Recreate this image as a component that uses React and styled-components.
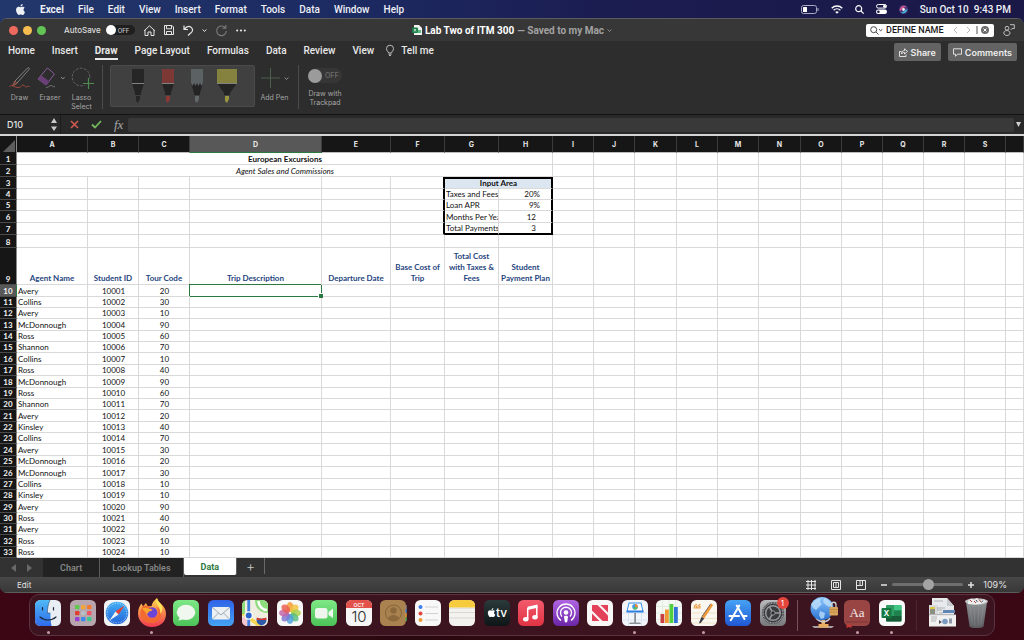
import React, { useState } from 'react';
import styled, { createGlobalStyle } from 'styled-components';

const GlobalStyle = createGlobalStyle`
  * {
    box-sizing: border-box;
  }

  body {
    margin: 0;
    background: #2a0812;
    font-family: Inter, "Liberation Sans", sans-serif;
  }

  button, input {
    margin: 0;
    padding: 0;
    border: 0;
    background: none;
    color: inherit;
    font: inherit;
    outline: none;
  }

  svg {
    display: block;
    flex: none;
    overflow: visible;
  }
`;

const Desktop = styled.div`
  display: flex;
  flex-direction: column;
  min-height: 100vh;
  background: linear-gradient(90deg, #22376b 0%, #1c2a62 35%, #1b1c50 60%, #1a1847 100%) top / 100% 30px no-repeat,
    linear-gradient(90deg, #3d0615, #2a0810 40%, #3a0814);
`;

/* menu bar */

const MenuBar = styled.header`
  display: flex;
  align-items: center;
  justify-content: space-between;
  height: 18px;
  padding: 0 13px 0 15px;
  color: #eef0f6;
  font-size: 10px;
`;

const MenuGroup = styled.div`
  display: flex;
  align-items: center;
  gap: ${(props) => props.$gap}px;
`;

const MenuItem = styled.button`
  font-family: Roboto, sans-serif;
  font-weight: ${(props) => (props.$strong ? 700 : 500)};
  line-height: 17px;
  white-space: nowrap;
`;

const IconButton = styled.button`
  display: flex;
  align-items: center;
  justify-content: center;
  color: ${(props) => props.$color || '#e4e4e4'};
`;

/* window */

const Window = styled.main`
  display: flex;
  flex: 1;
  flex-direction: column;
  overflow: hidden;
  border-top: 1px solid #5c5c60;
  border-radius: 7px;
  background: #2d2d2d;
`;

const TitleBar = styled.div`
  display: grid;
  grid-template-columns: 1fr auto 1fr;
  align-items: center;
  height: 22px;
  padding: 0 9px;
  background: #373737;
  color: #e4e4e4;
  font-size: 9px;
`;

const TitleSide = styled.div`
  display: flex;
  align-items: center;
  justify-content: ${(props) => (props.$end ? 'flex-end' : 'flex-start')};
  gap: ${(props) => props.$gap}px;
`;

const Lights = styled.div`
  display: flex;
  gap: 5px;
  margin-right: 9px;
`;

const Light = styled.button`
  width: 9px;
  height: 9px;
  border-radius: 50%;
  background: ${(props) => props.$color};
`;

const SwitchLabel = styled.label`
  display: flex;
  align-items: center;
  gap: 5px;
  font-weight: 500;
  font-size: 8px;
  color: #dcdcdc;
`;

const Switch = styled.span`
  display: flex;
  align-items: center;
  gap: ${(props) => (props.$large ? 3 : 2)}px;
  width: ${(props) => (props.$large ? 34 : 29)}px;
  height: ${(props) => (props.$large ? 15 : 10)}px;
  border-radius: 8px;
  background: ${(props) => (props.$large ? '#363636' : '#1f1f1f')};
  color: ${(props) => (props.$large ? '#6d6d6d' : '#c4c4c4')};
  font-size: ${(props) => (props.$large ? 7 : 6)}px;
  font-weight: 500;
`;

const SwitchInput = styled.input`
  appearance: none;
  width: ${(props) => props.$size}px;
  height: ${(props) => props.$size}px;
  border-radius: 50%;
  background: ${(props) => props.$color};
`;

const DocTitle = styled.h1`
  display: flex;
  align-items: center;
  gap: 3px;
  margin: 0;
  color: #fff;
  font-family: Roboto, sans-serif;
  font-size: 10px;
  font-weight: 700;
  white-space: nowrap;

  span {
    color: #a2a2a2;
  }
`;

const SearchBox = styled.div`
  display: flex;
  align-items: center;
  gap: 3px;
  width: 128px;
  height: 13px;
  padding: 0 5px 0 4px;
  border-radius: 2px;
  background: #fff;
`;

const SearchInput = styled.input`
  flex: 1;
  min-width: 0;
  color: #1a1a1a;
  font-family: Roboto, sans-serif;
  font-size: 9px;
  font-weight: 500;
`;

const Tabs = styled.nav`
  display: flex;
  align-items: flex-start;
  gap: 17px;
  height: 22px;
  padding: 2px 7px 0 8px;
  color: #e8e8e8;
  font-size: 10px;
`;

const Tab = styled.button`
  height: 17px;
  border-bottom: 2px solid ${(props) => (props.$active ? '#e8e8e8' : 'transparent')};
  font-family: Roboto, sans-serif;
  font-weight: ${(props) => (props.$active ? 700 : 500)};
  line-height: 15px;
  white-space: nowrap;
`;

const TellMe = styled(Tab)`
  display: flex;
  align-items: center;
  gap: 7px;
  margin-left: -5px;
`;

const TabActions = styled.div`
  display: flex;
  gap: 7px;
  margin-left: auto;
`;

const ActionButton = styled.button`
  display: flex;
  align-items: center;
  gap: 3px;
  height: 18px;
  padding: 0 5px;
  border-radius: 2px;
  background: #636363;
  color: #ececec;
  font-size: 9px;
  font-weight: 600;
`;

const Ribbon = styled.section`
  display: flex;
  height: 51px;
  padding: 2px 6px 0;
  color: #a5a5a5;
  font-size: 7px;
`;

const Tool = styled.button`
  display: flex;
  flex-direction: column;
  align-items: center;
  gap: 2px;
  width: ${(props) => props.$width}px;
  height: 46px;
  line-height: 9px;
`;

const ToolIcon = styled.span`
  display: flex;
  align-items: center;
  justify-content: center;
  gap: 4px;
  height: 26px;
`;

const Divider = styled.div`
  width: 1px;
  height: 44px;
  margin-left: 6px;
  background: #4c4c4c;
`;

const PenGallery = styled.div`
  display: flex;
  align-items: flex-start;
  justify-content: space-around;
  width: 145px;
  height: 42px;
  margin: 0 2px 0 7px;
  padding: 3px 12px;
  border: 1px solid #4b4b4b;
  border-radius: 2px;
  background: #404040;
`;

const TrackpadLabel = styled.label`
  display: flex;
  flex-direction: column;
  align-items: center;
  gap: 6px;
  width: 52px;
  padding-top: 3px;
  line-height: 9px;
  text-align: center;
`;

const FormulaBar = styled.div`
  display: flex;
  align-items: center;
  height: 22px;
  border-top: 1px solid #141414;
  border-bottom: 2px solid #d4d4d4;
  background: #292929;
  color: #e2e2e2;
`;

const NameBox = styled.input`
  width: 51px;
  padding-left: 7px;
  font-size: 9px;
  font-weight: 500;
`;

const Stepper = styled.div`
  display: flex;
  align-items: center;
  width: 10px;
  height: 19px;
  border-right: 1px solid #1c1c1c;
`;

const FormulaButtons = styled.div`
  display: flex;
  align-items: center;
  gap: 12px;
  padding: 0 5px 0 9px;
`;

const Fx = styled.button`
  color: #a9a9a9;
  font-family: "Liberation Serif", serif;
  font-size: 13px;
  font-style: italic;
  line-height: 14px;
`;

const FormulaInput = styled.input`
  flex: 1;
  height: 14px;
  margin-right: 2px;
  border-radius: 2px;
  background: #393939;
`;

/* sheet */

const Sheet = styled.div`
  flex: 1;
  overflow: hidden;
  background: #fff;
`;

const Grid = styled.table`
  width: 100%;
  table-layout: fixed;
  border-spacing: 0;
  color: #111;
  font-family: Lato, "Liberation Sans", sans-serif;
  font-size: 8px;
  line-height: 10px;
`;

const Corner = styled.th`
  height: 17px;
  padding: 0 1px 1px 3px;
  border-right: 1px solid #8a8a8a;
  background: #161616;
  vertical-align: bottom;
`;

const ColumnHead = styled.th`
  height: 17px;
  padding: 2px 0 0;
  border-right: 1px solid #3c3c3c;
  border-bottom: 1px solid ${(props) => (props.$active ? '#2c7a41' : '#bdbdbd')};
  background: ${(props) => (props.$active ? '#585858' : '#161616')};
  color: #e8e8e8;
  font-family: Inter, sans-serif;
  font-size: 7px;
  font-weight: 700;
`;

const RowHead = styled.th`
  padding: 0;
  border-right: 1px solid ${(props) => (props.$active ? '#2c7a41' : '#8a8a8a')};
  border-bottom: 1px solid #4a4a4a;
  background: ${(props) => (props.$active ? '#585858' : '#161616')};
  color: #f2f2f2;
  font-weight: 700;
  vertical-align: bottom;
`;

const frameSides = {
  t: 'border-top: 2px solid #000; line-height: 9px;',
  b: 'border-bottom: 2px solid #000;',
  r: 'border-right: 2px solid #000;',
};

const Cell = styled.td`
  overflow: hidden;
  height: ${(props) => props.$height}px;
  padding: 0 ${(props) => props.$padRight || 0}px 0 1px;
  border-right: 1px solid #d9d9d9;
  border-bottom: 1px solid #d9d9d9;
  background: ${(props) => props.$fill || 'transparent'};
  font-style: ${(props) => (props.$italic ? 'italic' : 'normal')};
  font-weight: ${(props) => (props.$bold ? 700 : 400)};
  text-align: ${(props) => props.$align || 'left'};
  vertical-align: bottom;
  white-space: nowrap;
  ${(props) => (props.$frame || '').split('').map((side) => frameSides[side]).join(' ')}
`;

const HeadingCell = styled(Cell)`
  padding: 0;
  color: #1f4580;
  font-weight: 700;
  line-height: 11px;
  text-align: center;
  white-space: pre-line;
`;

const ActiveCell = styled(Cell)`
  position: relative;
  overflow: visible;
  border-color: #2c7a41;
  box-shadow: -1px -1px 0 #2c7a41;

  &::after {
    content: '';
    position: absolute;
    right: -2px;
    bottom: -2px;
    width: 4px;
    height: 4px;
    border: 1px solid #fff;
    border-width: 1px 0 0 1px;
    background: #2c7a41;
  }
`;

const SheetTabs = styled.div`
  display: flex;
  height: 19px;
  background: #323232;
  color: #8c8c8c;
  font-size: 9px;
`;

const SheetNav = styled.div`
  display: flex;
  align-items: center;
  justify-content: center;
  gap: 11px;
  width: 43px;
`;

const SheetTab = styled.button`
  height: ${(props) => (props.$active ? 17 : 19)}px;
  padding: 0 ${(props) => props.$pad}px;
  border-right: 1px solid #5c5c5c;
  border-radius: ${(props) => (props.$active ? '0 0 2px 2px' : 0)};
  background: ${(props) => (props.$active ? '#fff' : '#222')};
  color: ${(props) => (props.$active ? '#2c7a41' : '#8c8c8c')};
  font-family: Roboto, sans-serif;
  font-weight: ${(props) => (props.$active ? 700 : 500)};
  white-space: nowrap;
`;

const AddSheet = styled.button`
  width: 28px;
  height: 16px;
  border-right: 1px solid #6a6a6a;
  color: #c4c4c4;
  font-size: 14px;
  font-weight: 300;
  line-height: 14px;
`;

const StatusBar = styled.footer`
  display: flex;
  align-items: center;
  justify-content: space-between;
  height: 16px;
  padding: 0 17px;
  border-bottom: 1px solid #5c5c5c;
  background: linear-gradient(#484848, #383838);
  color: #e0e0e0;
  font-size: 8px;
`;

const StatusTools = styled.div`
  display: flex;
  align-items: center;
  gap: 15px;
`;

const ZoomControl = styled.div`
  display: flex;
  align-items: center;
  gap: 5px;
`;

const ZoomSlider = styled.input`
  appearance: none;
  width: 71px;
  height: 3px;
  border-radius: 2px;
  background: #6e6e6e;

  &::-webkit-slider-thumb {
    appearance: none;
    width: 11px;
    height: 11px;
    border-radius: 50%;
    background: #a4a4a4;
  }
`;

const ZoomValue = styled.output`
  width: 28px;
  font-size: 9px;
  text-align: right;
`;

/* dock */

const Dock = styled.nav`
  display: flex;
  justify-content: space-between;
  height: 42px;
  margin: 1px 29px 4px;
  padding: 5px 5px 0;
  border: 1px solid #5a343f;
  border-radius: 10px;
  background: #3c1420;
`;

const DockItem = styled.button`
  position: relative;
  display: flex;
  flex-direction: column;
  align-items: center;
  gap: 5px;
  width: 26px;

  &::after {
    content: '';
    width: 3px;
    height: 3px;
    border-radius: 50%;
    background: ${(props) => (props.$running ? '#c99aa5' : 'transparent')};
  }
`;

const DockDivider = styled.div`
  width: 1px;
  height: 31px;
  margin: 0 3px;
  background: ${(props) => (props.$faint ? '#4c2530' : '#75515b')};
`;

const Badge = styled.span`
  position: absolute;
  top: -3px;
  right: -3px;
  width: 12px;
  height: 12px;
  border-radius: 50%;
  background: #e5463c;
  color: #fff;
  font-size: 8px;
  line-height: 12px;
`;

const appleShape =
  'M12.15 6.9c-.95 0-2.42-1.08-3.96-1.04-2.04.03-3.91 1.18-4.96 3.01-2.12 3.68-.55 9.1 1.52 12.09 1.01 1.45 2.21 3.09 3.79 3.04 1.52-.07 2.09-.99 3.94-.99 1.83 0 2.35.99 3.96.95 1.64-.03 2.68-1.48 3.68-2.95 1.16-1.69 1.64-3.33 1.66-3.42-.04-.01-3.18-1.22-3.22-4.86-.03-3.04 2.48-4.49 2.6-4.56-1.43-2.09-3.62-2.32-4.39-2.38-2-.16-3.68 1.09-4.62 1.09zM15.53 3.83c.84-1.01 1.4-2.43 1.25-3.83-1.21.05-2.66.8-3.53 1.82-.78.9-1.46 2.34-1.27 3.71 1.34.1 2.72-.69 3.55-1.7';

const Chevron = ({ color = 'currentColor', size = 5 }) => (
  <svg width={size} height={size} viewBox="0 0 6 6" fill="none" stroke={color} strokeWidth="1.2">
    <path d="M.8 1.8 3 4.2l2.2-2.4" />
  </svg>
);

const Tile = ({ fill, children }) => (
  <svg width="26" height="26" viewBox="0 0 26 26">
    <rect width="26" height="26" rx="5.5" fill={fill} />
    {children}
  </svg>
);

const Gradients = () => (
  <svg width="0" height="0" aria-hidden="true">
    <defs>
      {[
        ['gFinder', '#4fb9f6', '#2f6bea'],
        ['gSafari', '#45b0f5', '#2363d8'],
        ['gFox', '#ffd84a', '#f03a50'],
        ['gGreen', '#7ee886', '#4cc358'],
        ['gMail', '#2f62e6', '#45a4f3'],
        ['gTv', '#2b3a3c', '#0e1517'],
        ['gMusic', '#f25a6c', '#e03343'],
        ['gPod', '#b066e2', '#6c25a8'],
        ['gStore', '#45a2f4', '#2058d4'],
        ['gGear', '#b9babc', '#78797b'],
        ['gGlobe', '#8cc8ff', '#2c73d0'],
        ['gTrash', '#8e9193', '#5b5d60'],
      ].map(([id, from, to]) => (
        <linearGradient key={id} id={id} x1="0" y1="0" x2="0" y2="1">
          <stop offset="0" stopColor={from} />
          <stop offset="1" stopColor={to} />
        </linearGradient>
      ))}
    </defs>
  </svg>
);

const FinderIcon = () => (
  <Tile fill="#e9eef4">
    <path d="M5.500 0H15c-1.800 4-2.600 8-2.600 13h3c0 5 .3 9 1.200 13H5.500A5.500 5.500 0 0 1 0 20.500v-15A5.500 5.500 0 0 1 5.500 0z" fill="url(#gFinder)" />
    <path d="M7.500 7.500v2.500M18.500 7.500v2.500M5 17c4.500 4 11.500 4 16 0" fill="none" stroke="#1d2b3f" strokeWidth="1.200" strokeLinecap="round" />
    <path d="M15 0c-1.800 4-2.600 8-2.600 13h3" fill="none" stroke="#23364f" strokeWidth=".5" />
  </Tile>
);

const launchColors = ['#5fc94f', '#f2a63a', '#f07a30', '#e2402f', '#b9bdc4', '#ee5465', '#9b3fd0', '#3a8bea', '#3cc88e'];

const LaunchpadIcon = () => (
  <Tile fill="#b8a6ae">
    {launchColors.map((color, i) => (
      <rect key={color} x={5 + (i % 3) * 6} y={5 + Math.floor(i / 3) * 6} width="4.500" height="4.200" rx="1" fill={color} />
    ))}
  </Tile>
);

const SafariIcon = () => (
  <Tile fill="#f3f4f6">
    <circle cx="13" cy="13" r="11.300" fill="url(#gSafari)" />
    <circle cx="13" cy="13" r="9.800" fill="none" stroke="#cfe6fb" strokeWidth="1.200" strokeDasharray=".5 1.200" />
    <path d="M20.500 5.500 14.500 14.500 11.500 11.500z" fill="#e8402f" />
    <path d="M5.500 20.500 11.500 11.500 14.500 14.500z" fill="#f4f4f4" />
  </Tile>
);

const FirefoxIcon = () => (
  <svg width="26" height="26" viewBox="0 0 26 26">
    <path d="M18-2c1 2.500 1.500 3.500 3 5 3.500 3 6 6 6 11 0 8-6 13-14 13S-1 21-1 13.500C-1 9 .5 6 2.500 3.500L4 6.500l3-3.500 1.500 3 4 .2C13 3 15 .5 18-2z" fill="url(#gFox)" />
    <path d="M4 6c3-1 6 0 8 1.500l-3 2c-3 1-3 5-1 7 3 3.500 9 2.500 11-1.500 1-3 0-6-2-8 3 1 5.500 4 5 8-.500 5-5 8-9.500 8C6 23 1 18 1.500 12 2 9 3 7.500 4 6z" fill="#f26a2f" />
    <circle cx="13.200" cy="12.500" r="5.200" fill="#6b46d6" />
    <path d="M3 8.500c3-1.500 6-.8 7.500.2l3 .3c-.2 2-2.500 2.200-3.500 2.500-.3 1.500-1.500 2-2.500 2z" fill="#fba52b" />
    <path d="M18-2c-1.500 3-.5 6 1.500 8.500 1.500 2 2 4.500 1.500 7.500 3-3 3-7 1-10-2-2-3.500-3.500-4-6z" fill="#ffe25a" />
  </svg>
);

const MessagesIcon = () => (
  <Tile fill="url(#gGreen)">
    <ellipse cx="13" cy="12.300" rx="9.300" ry="7.600" fill="#eff7ef" />
    <path d="M6.500 16.500c.3 2-.4 3.200-1.500 4 2.500 0 4.500-.8 5.500-2z" fill="#eff7ef" />
  </Tile>
);

const MailIcon = () => (
  <Tile fill="url(#gMail)">
    <rect x="4" y="7" width="18" height="12.500" rx="1.500" fill="#edf0f3" />
    <path d="M4.500 7.500 13 15l8.500-7.500M4.500 19l6-6M21.500 19l-6-6" fill="none" stroke="#8c98a6" strokeWidth=".8" />
  </Tile>
);

const MapsIcon = () => (
  <Tile fill="#efece0">
    <path d="M13 0h7.500A5.500 5.500 0 0 1 26 5.500V13C18 13 13 8 13 0z" fill="#8fdc7e" />
    <path d="M16.500 1c0 5 4 9 8.500 9" fill="none" stroke="#fff" strokeWidth="2.500" />
    <path d="M0 18v2.500A5.500 5.500 0 0 0 5.500 26H10L2 17z" fill="#f3c6cf" />
    <path d="M0 10 20 25.500 15 26 0 15z" fill="#f5d64f" />
    <path d="M3 .6V14H0V5.500C0 3.200 1.200 1.400 3 .6z" fill="#8fdc7e" />
    <path d="M6.700 0v26" stroke="#3f7fe0" strokeWidth="2.800" />
    <circle cx="6.700" cy="15.500" r="4.200" fill="#fff" />
    <circle cx="6.700" cy="15.500" r="3" fill="#2c66c8" />
    <path d="M15 18c3 1 6 1 9 0 1.500 4-1 6.500-4.500 7.500C16 24.500 13.500 22 15 18z" fill="#2d59a8" />
    <path d="M14.700 17.500c3 1.500 6.500 1.500 9.600 0v2.500h-9.600z" fill="#d8392f" />
  </Tile>
);

const petals = ['#f29b2f', '#f3c13c', '#a8cf45', '#55bd7d', '#4a9fdc', '#7e74cf', '#c264a8', '#ec5a4f'];

const PhotosIcon = () => (
  <Tile fill="#f7f7f7">
    {petals.map((color, i) => (
      <ellipse key={color} cx="13" cy="7" rx="3.500" ry="5" fill={color} opacity=".82" transform={`rotate(${i * 45} 13 13)`} />
    ))}
  </Tile>
);

const FaceTimeIcon = () => (
  <Tile fill="url(#gGreen)">
    <rect x="4" y="8" width="12.500" height="10.500" rx="2.500" fill="#eef6ee" />
    <path d="m17.500 12 4.500-3.500v9.500L17.500 15z" fill="#eef6ee" />
  </Tile>
);

const CalendarIcon = () => (
  <Tile fill="#f6f6f6">
    <path d="M0 8V5.500A5.500 5.500 0 0 1 5.500 0h15A5.500 5.500 0 0 1 26 5.500V8z" fill="#e2524a" />
    <text x="13" y="6.500" textAnchor="middle" fontSize="5" fontWeight="600" fill="#fff">OCT</text>
    <text x="13" y="22" textAnchor="middle" fontSize="15" fontWeight="300" fill="#2a2a2a">10</text>
  </Tile>
);

const ContactsIcon = () => (
  <Tile fill="#a9824f">
    <path d="M25.500 5h1.200v4h-1.200z" fill="#8d8d8d" />
    <path d="M25.500 9h1.200v4h-1.200z" fill="#3f8be0" />
    <path d="M25.500 13h1.200v4h-1.200z" fill="#f0a030" />
    <path d="M25.500 17h1.200v4h-1.200z" fill="#52b955" />
    <circle cx="13.500" cy="13" r="8" fill="none" stroke="#86653a" />
    <circle cx="13.500" cy="10.500" r="3.200" fill="#8b693c" />
    <path d="M8 18.700c1-5 10-5 11 0-3 2.800-8 2.800-11 0z" fill="#8b693c" />
  </Tile>
);

const RemindersIcon = () => (
  <Tile fill="#f8f8f8">
    {['#3f7ff0', '#e0463c', '#ee9a36'].map((color, i) => (
      <g key={color}>
        <circle cx="5.500" cy={7 + i * 6.500} r="2" fill={color} />
        <path d={`M10 ${7 + i * 6.500}h13`} stroke="#c8c8c8" strokeWidth=".8" />
      </g>
    ))}
  </Tile>
);

const NotesIcon = () => (
  <Tile fill="#f3f2ee">
    <path d="M0 7.500v-2A5.500 5.500 0 0 1 5.500 0h15A5.500 5.500 0 0 1 26 5.500v2z" fill="#f7cb3e" />
    <path d="M0 12.500h26M0 18h26" stroke="#cfcdc8" strokeWidth=".7" />
    <path d="M0 8.300h26" stroke="#b5b0a4" strokeWidth=".6" strokeDasharray=".8 .8" />
  </Tile>
);

const TvIcon = () => (
  <Tile fill="url(#gTv)">
    <path d={appleShape} fill="#fff" transform="translate(3 8) scale(.38)" />
    <text x="12" y="17" fontSize="12" fontWeight="500" fill="#fff">tv</text>
  </Tile>
);

const MusicIcon = () => (
  <Tile fill="url(#gMusic)">
    <path d="M9.500 6.700 19.500 4.500v3.300L9.500 10z" fill="#fff" />
    <path d="M9.700 8v11M18.800 6v11.500" stroke="#fff" strokeWidth="1.500" />
    <ellipse cx="7.800" cy="19.300" rx="2.700" ry="2.200" fill="#fff" />
    <ellipse cx="17" cy="17.300" rx="2.700" ry="2.200" fill="#fff" />
  </Tile>
);

const PodcastsIcon = () => (
  <Tile fill="url(#gPod)">
    <g fill="none" stroke="#fff" strokeWidth="1.300">
      <path d="M8 20.500a9 9 0 1 1 10 0" />
      <path d="M9 16.500a5.500 5.500 0 1 1 8 0" />
    </g>
    <circle cx="13" cy="12.500" r="2.300" fill="#fff" />
    <path d="M11 16.500c0-1 4-1 4 0l-.7 5c-.3 1.200-2.300 1.200-2.600 0z" fill="#fff" />
  </Tile>
);

const NewsIcon = () => (
  <Tile fill="#f8f6f6">
    <path d="M5 5h5.500L21 15.500V21h-5.500L5 10.500z" fill="#e3405a" />
    <path d="M13.500 5H21v7.500zM5 13.500V21h7.500z" fill="#e3405a" />
  </Tile>
);

const KeynoteIcon = () => (
  <Tile fill="#f2f5f9">
    <path d="M6.500 0v26M19.500 0v26M0 13h26M0 20h26" stroke="#d3dfee" strokeWidth=".7" />
    <path d="M12.300 13h1.600v10h-1.600z" fill="#7f858c" />
    <path d="M8 22.500h10l1 1.500H7z" fill="#8b9097" />
    <path d="M7 3h12l2 8.500H5z" fill="#fff" stroke="#3a8ee6" strokeWidth="1" />
    <path d="M4.500 10.500h17v2h-17z" fill="#2c7fe0" />
    <circle cx="13" cy="6.800" r="2.800" fill="#3f9be8" />
    <path d="M13 6.800V4a2.800 2.800 0 0 1 2.600 3.800z" fill="#f08a34" />
    <path d="M13 6.800 15.600 7.800A2.800 2.800 0 0 1 11 8.800z" fill="#5fc05a" />
  </Tile>
);

const NumbersIcon = () => (
  <Tile fill="#f5f8f4">
    <path d="M6.500 0v26M13 0v26M19.500 0v26M0 6.500h26M0 13h26M0 19.500h26" stroke="#d7e8d5" strokeWidth=".7" />
    <path d="M4.500 14h3.800v9H4.500z" fill="#c93f3f" />
    <path d="M9 9.500h3.800V23H9z" fill="#ef9a34" />
    <path d="M13.500 4h3.800v19h-3.800z" fill="#52cf3f" />
    <path d="M18 7h3.800v16H18z" fill="#2f72d8" />
  </Tile>
);

const PagesIcon = () => (
  <Tile fill="#faf7f0">
    <path d="M0 13h26M0 18.500h26M1 23h24" stroke="#ead9b8" strokeWidth=".7" />
    <path d="M20 3.500 22.200 5l-9 13.500-2.600-1.700z" fill="#f09a3e" />
    <path d="m10.600 16.800 2.600 1.700-3.500 4.500-1.500.5.200-1.700z" fill="#3d3f45" />
    <path d="M19.700 3.800 11 16.500" stroke="#5a5c60" strokeWidth=".8" />
    <path d="M6 4.200C4.200 4.500 3.200 6 3.200 8h2.300V6.200H4.600M9.500 4.200C7.700 4.500 6.700 6 6.700 8H9V6.200H8" fill="none" stroke="#eda04c" strokeWidth="1.100" />
  </Tile>
);

const AppStoreIcon = () => (
  <Tile fill="url(#gStore)">
    <g stroke="#fff" strokeWidth="2" strokeLinecap="round">
      <path d="m14.300 5.500-7.500 13M11.700 5.500l7.800 13.500M4.500 16h9.500M18.500 16h3M6.500 19l-.8 1.200" />
    </g>
  </Tile>
);

const SettingsIcon = () => (
  <Tile fill="url(#gGear)">
    <circle cx="13" cy="13" r="11" fill="#3b3c3f" />
    <circle cx="13" cy="13" r="10" fill="none" stroke="#a3a4a6" strokeWidth="1.500" strokeDasharray="1 .6" />
    <circle cx="13" cy="13" r="7.300" fill="none" stroke="#98999c" strokeWidth="1.500" />
    <path d="M13 13h7M13 13l-3.500-6M13 13l-3.500 6" stroke="#98999c" strokeWidth="1.500" />
    <circle cx="13" cy="13" r="2.200" fill="#2c2d30" stroke="#98999c" />
  </Tile>
);

const NetworkIcon = () => (
  <svg width="26" height="26" viewBox="0 0 26 26">
    <path d="M2 26h22l-2 2H4z" fill="#a9a0a4" />
    <path d="M11.500 20h3.500v4h3.500v3.500h-10V24h3z" fill="#e9ae62" />
    <path d="M6 18c4 5 11 5 14 0" fill="none" stroke="#c8cdd4" strokeWidth="1.500" />
    <circle cx="12" cy="8.500" r="11.500" fill="url(#gGlobe)" />
    <path d="M4 1c3-2 5-3 7-2l-1 3 2 2-3 3-3 3-3-2-2-4zM14-2c4 1 7 4 8 7l-3 2-3-2-3-3zM10 11l5 2-1 5-3 1-2-4z" fill="#c4e3fb" opacity=".75" />
    <rect x="19.500" y="7" width="8.500" height="8.500" rx="1" fill="#d9a55b" />
    <path d="M21.500 7V4.500a2.200 2.200 0 0 1 4.500 0V7" fill="none" stroke="#d0d0d0" strokeWidth="1.300" />
    <path d="M19.500 9.500H28M19.500 12H28" stroke="#a97a3b" strokeWidth=".6" />
  </svg>
);

const DictionaryIcon = () => (
  <Tile fill="#984543">
    <path d="M2 22h22" stroke="#7a3230" strokeWidth=".8" />
    <path d="M2.500 24.500h5V28L5 27l-2.500 1z" fill="#c23a35" />
    <text x="13" y="17" textAnchor="middle" fontFamily="Liberation Serif, serif" fontSize="13" fill="#f4eaea">Aa</text>
  </Tile>
);

const ExcelTile = () => (
  <Tile fill="#fbfbfb">
    <rect x="7" y="5" width="15.500" height="16.500" rx="1" fill="#2f9c62" />
    <path d="M15 5h6.500a1 1 0 0 1 1 1v4.500H15z" fill="#42c686" />
    <path d="M15 10.500h7.500V16H15z" fill="#1f8350" />
    <path d="M7 16h15.500v4.500a1 1 0 0 1-1 1H8a1 1 0 0 1-1-1z" fill="#185c37" />
    <rect x="2.500" y="8" width="10" height="10" rx="1" fill="#157a41" />
    <text x="7.500" y="16" textAnchor="middle" fontSize="8" fontWeight="600" fill="#fff">X</text>
  </Tile>
);

const DocumentIcon = () => (
  <svg width="26" height="26" viewBox="0 0 26 26">
    <path d="M3-2h15l7 8v10H3z" fill="#e7e9ea" />
    <path d="M18-2v8h7" fill="#c9cccf" />
    <path d="M0 5h9v11H0z" fill="#d7d9da" />
    <path d="M1 7h5v7H1z" fill="#8b8f80" />
    <path d="M1 7h5v2H1z" fill="#dac944" />
    <path d="M14 10h12v3H14z" fill="#5f86b5" />
    <path d="M0 15h27v11.500H0z" fill="#f0f0f0" />
    <path d="M2 17h6M2 19h6M2 21h5M10 13h4M8 8h8M8 10h5M5 1h9M0 14.700h27" stroke="#9ea2a6" strokeWidth=".8" />
    <circle cx="16" cy="21.500" r="2.800" fill="#7b9bc3" />
    <path d="M20 18.500h3v5h-3z" fill="#8f9aa6" />
    <path d="m10 20 3 2-3 2z" fill="#50555b" />
  </svg>
);

const TrashIcon = () => (
  <svg width="26" height="26" viewBox="0 0 26 26">
    <path d="M3 2h21l-3.500 24.500c-2 2-12 2-14 0z" fill="url(#gTrash)" />
    <path d="M6.500 4l3 21M11 5l1 21M16 5l-1 21M20.500 4l-3 21" stroke="#999c9e" strokeWidth=".4" />
    <ellipse cx="13.500" cy="1.500" rx="11.500" ry="3.200" fill="#c3c4c6" />
    <path d="M5 1 8-1.500l3 1.500 3-2 3 2.500 4-1 2 2-5 2.500-6 .5-7-.5z" fill="#ededed" />
    <path d="m7 0 2 2M16-.5l2 2.500M11 1l2 2" stroke="#b5483c" strokeWidth="1" />
    <path d="m13 0 1.500 2M20 .5l-1.500 2" stroke="#42536b" strokeWidth="1" />
  </svg>
);

const apps = [
  { name: 'Finder', Icon: FinderIcon, running: true },
  { name: 'Launchpad', Icon: LaunchpadIcon },
  { name: 'Safari', Icon: SafariIcon },
  { name: 'Firefox', Icon: FirefoxIcon, running: true },
  { name: 'Messages', Icon: MessagesIcon },
  { name: 'Mail', Icon: MailIcon },
  { name: 'Maps', Icon: MapsIcon },
  { name: 'Photos', Icon: PhotosIcon },
  { name: 'FaceTime', Icon: FaceTimeIcon },
  { name: 'Calendar', Icon: CalendarIcon },
  { name: 'Contacts', Icon: ContactsIcon },
  { name: 'Reminders', Icon: RemindersIcon },
  { name: 'Notes', Icon: NotesIcon },
  { name: 'TV', Icon: TvIcon },
  { name: 'Music', Icon: MusicIcon },
  { name: 'Podcasts', Icon: PodcastsIcon },
  { name: 'News', Icon: NewsIcon },
  { name: 'Keynote', Icon: KeynoteIcon, running: true },
  { name: 'Numbers', Icon: NumbersIcon },
  { name: 'Pages', Icon: PagesIcon, running: true },
  { name: 'App Store', Icon: AppStoreIcon },
  { name: 'System Preferences', Icon: SettingsIcon, badge: 1 },
  { divider: true },
  { name: 'Network', Icon: NetworkIcon },
  { name: 'Dictionary', Icon: DictionaryIcon, running: true },
  { name: 'Microsoft Excel', Icon: ExcelTile, running: true },
  { divider: true, faint: true },
  { name: 'Documents', Icon: DocumentIcon },
  { name: 'Trash', Icon: TrashIcon },
];

const menus = ['File', 'Edit', 'View', 'Insert', 'Format', 'Tools', 'Data', 'Window', 'Help'];
const tabs = ['Home', 'Insert', 'Draw', 'Page Layout', 'Formulas', 'Data', 'Review', 'View'];

const columns = [
  ['A', 71], ['B', 51], ['C', 51], ['D', 132], ['E', 69], ['F', 54], ['G', 54], ['H', 54], ['I', 41], ['J', 41],
  ['K', 42], ['L', 41], ['M', 41], ['N', 42], ['O', 41], ['P', 41], ['Q', 41], ['R', 41], ['S', 41],
];

const headings = [
  'Agent  Name', 'Student ID', 'Tour Code', 'Trip Description', 'Departure Date',
  'Base Cost of\nTrip', 'Total Cost\nwith Taxes &\nFees', 'Student\nPayment Plan',
];

const inputs = [
  { label: 'Taxes and Fees', value: '20%', height: 11, pad: 11 },
  { label: 'Loan APR', value: '9%', height: 11, pad: 11 },
  { label: 'Months Per Year', value: '12', height: 12, pad: 15 },
  { label: 'Total Payments', value: '3', height: 12, pad: 15 },
];

const agents = [
  ['Avery', 20], ['Collins', 30], ['Avery', 10], ['McDonnough', 90], ['Ross', 60], ['Shannon', 70],
  ['Collins', 10], ['Ross', 40], ['McDonnough', 90], ['Ross', 60], ['Shannon', 70], ['Avery', 20],
  ['Kinsley', 40], ['Collins', 70], ['Avery', 30], ['McDonnough', 20], ['McDonnough', 30], ['Collins', 10],
  ['Kinsley', 10], ['Avery', 90], ['Ross', 40], ['Avery', 60], ['Ross', 10], ['Ross', 10],
];

const rowHeight = (i) => ([0, 3, 6].includes(i % 8) ? 12 : 11);

const Blanks = ({ count, height }) => Array.from({ length: count }, (_, i) => <Cell key={i} $height={height} />);

const Pen = ({ color, tip, width: w = 12, jagged }) => (
  <svg width="20" height="34" viewBox={`${w / 2 - 10} 0 20 34`}>
    <path d={`M0 14h${w}L${w / 2 + 3} 24v2H${w / 2 - 3}v-2z`} fill="#242424" />
    <path
      d={jagged ? `M0 0h${w}v14l-1.500 3-1.500-3-1.500 3-1.500-3-1.500 3-1.500-3-1.500 3L0 14z` : `M0 0h${w}v14H0z`}
      fill={color}
    />
    {!jagged && <path d={`M0 14.500h${w}`} stroke="#9a9a9a" strokeWidth=".8" />}
    <path d={`M${w / 2 - 2} 27h4v3l-2 4-2-2z`} fill={tip} />
  </svg>
);

const Spreadsheet = () => (
  <Grid>
    <colgroup>
      <col width="17" />
      {columns.map(([name, width]) => (
        <col key={name} width={width} />
      ))}
      <col />
    </colgroup>
    <thead>
      <tr>
        <Corner>
          <svg width="12" height="12" viewBox="0 0 12 12">
            <path d="M12 0v12H0z" fill="#5d5d5d" />
          </svg>
        </Corner>
        {columns.map(([name]) => (
          <ColumnHead key={name} $active={name === 'D'}>{name}</ColumnHead>
        ))}
        <ColumnHead />
      </tr>
    </thead>
    <tbody>
      <tr>
        <RowHead>1</RowHead>
        <Cell colSpan={8} $height={12} $align="center" $bold>European Excursions</Cell>
        <Blanks count={12} height={12} />
      </tr>
      <tr>
        <RowHead>2</RowHead>
        <Cell colSpan={8} $height={12} $align="center" $italic>Agent Sales and Commissions</Cell>
        <Blanks count={12} height={12} />
      </tr>
      <tr>
        <RowHead>3</RowHead>
        <Blanks count={5} height={12} />
        <Cell $height={12} $frame="r" />
        <Cell colSpan={2} $height={12} $align="center" $bold $fill="#dce6f1" $frame="tr">Input Area</Cell>
        <Blanks count={12} height={12} />
      </tr>
      {inputs.map((row, i) => (
        <tr key={row.label}>
          <RowHead>{i + 4}</RowHead>
          <Blanks count={5} height={row.height} />
          <Cell $height={row.height} $frame="r" />
          <Cell $height={row.height} $frame={i === 3 ? 'b' : ''}>{row.label}</Cell>
          <Cell $height={row.height} $align="right" $padRight={row.pad} $frame={i === 3 ? 'rb' : 'r'}>{row.value}</Cell>
          <Blanks count={12} height={row.height} />
        </tr>
      ))}
      <tr>
        <RowHead>8</RowHead>
        <Blanks count={20} height={13} />
      </tr>
      <tr>
        <RowHead>9</RowHead>
        {headings.map((text) => (
          <HeadingCell key={text} $height={37}>{text}</HeadingCell>
        ))}
        <Blanks count={12} height={37} />
      </tr>
      {agents.map(([agent, tour], i) => (
        <tr key={i}>
          <RowHead $active={i === 0}>{i + 10}</RowHead>
          <Cell $height={rowHeight(i)}>{agent}</Cell>
          <Cell $height={rowHeight(i)} $align="center">{10001 + i}</Cell>
          <Cell $height={rowHeight(i)} $align="center">{tour}</Cell>
          {i === 0 ? <ActiveCell $height={rowHeight(i)} /> : <Cell $height={rowHeight(i)} />}
          <Blanks count={16} height={rowHeight(i)} />
        </tr>
      ))}
    </tbody>
  </Grid>
);

const App = () => {
  const [activeTab, setActiveTab] = useState('Draw');
  const [sheet, setSheet] = useState('Data');
  const [search, setSearch] = useState('DEFINE NAME');
  const [formula, setFormula] = useState('');
  const [zoom, setZoom] = useState(109);

  return (
    <Desktop>
      <GlobalStyle />
      <Gradients />
      <MenuBar>
        <MenuGroup $gap={14}>
          <IconButton aria-label="Apple menu">
            <svg width="11" height="11" viewBox="0 0 24 24" fill="#eef0f6"><path d={appleShape} /></svg>
          </IconButton>
          <MenuItem $strong>Excel</MenuItem>
          {menus.map((name) => (
            <MenuItem key={name}>{name}</MenuItem>
          ))}
        </MenuGroup>
        <MenuGroup $gap={12}>
          <IconButton aria-label="Battery">
            <svg width="18" height="9" viewBox="0 0 18 9">
              <rect x=".5" y=".5" width="15" height="8" rx="2" fill="none" stroke="#a9abc4" />
              <rect x="2" y="2" width="4" height="5" rx=".5" fill="#fff" />
              <path d="M17 3v3" stroke="#a9abc4" />
            </svg>
          </IconButton>
          <IconButton aria-label="Wi-Fi">
            <svg width="12" height="9" viewBox="0 0 12 9" fill="none" stroke="#fff" strokeWidth="1.400">
              <path d="M.7 3.200a7.600 7.600 0 0 1 10.600 0M2.600 5.200a5 5 0 0 1 6.800 0" />
              <path d="M6 8.800 4.200 7a2.600 2.600 0 0 1 3.600 0z" fill="#fff" stroke="none" />
            </svg>
          </IconButton>
          <IconButton aria-label="Spotlight">
            <svg width="9" height="9" viewBox="0 0 9 9" fill="none" stroke="#fff" strokeWidth="1.200">
              <circle cx="3.700" cy="3.700" r="3" />
              <path d="m6 6 2.700 2.700" />
            </svg>
          </IconButton>
          <IconButton aria-label="Control Center">
            <svg width="11" height="10" viewBox="0 0 11 10">
              <rect x=".5" y=".5" width="10" height="3.600" rx="1.800" fill="none" stroke="#fff" />
              <circle cx="8.500" cy="2.300" r="1.500" fill="#fff" />
              <rect x="0" y="5.500" width="11" height="4.500" rx="2.200" fill="#fff" />
              <circle cx="2.400" cy="7.750" r="1.300" fill="#1a1847" />
            </svg>
          </IconButton>
          <IconButton aria-label="Siri">
            <svg width="9" height="9" viewBox="0 0 9 9">
              <circle cx="4.500" cy="4.500" r="4.500" fill="#4b3a7c" />
              <path d="M.5 5C2 1 5 0 7 1.500 4 2 3.500 4 1 6z" fill="#e0568c" />
              <path d="M8.500 4C8 8 4 9.500 2 7.500 5 7 5.500 5 8.500 4z" fill="#39b6d8" />
              <circle cx="4.500" cy="4.500" r="1.400" fill="#f1f1ff" />
            </svg>
          </IconButton>
          <MenuItem>Sun Oct 10&nbsp; 9:43 PM</MenuItem>
        </MenuGroup>
      </MenuBar>

      <Window>
        <TitleBar>
          <TitleSide $gap={9}>
            <Lights>
              <Light $color="#ee6a5f" aria-label="Close" />
              <Light $color="#f5bd4f" aria-label="Minimize" />
              <Light $color="#61c454" aria-label="Zoom window" />
            </Lights>
            <SwitchLabel>
              AutoSave
              <Switch>
                <SwitchInput type="checkbox" $size={10} $color="#fff" />
                OFF
              </Switch>
            </SwitchLabel>
            <IconButton aria-label="Home">
              <svg width="11" height="11" viewBox="0 0 11 11" fill="none" stroke="currentColor">
                <path d="M1 5v5.500h3V7h3v3.500h3V5L5.500.8zM0 5.800 1 5M11 5.800 10 5" />
              </svg>
            </IconButton>
            <IconButton aria-label="Save">
              <svg width="10" height="10" viewBox="0 0 10 10" fill="none" stroke="currentColor">
                <path d="M.5.5H8L9.500 2v7.500h-9zM2.500.5v3.300h5V.5M2.500 9.500v-3h5v3" />
              </svg>
            </IconButton>
            <IconButton aria-label="Undo">
              <svg width="10" height="11" viewBox="0 0 10 11" fill="none" stroke="currentColor" strokeWidth="1.200">
                <path d="M1 .5v4h4M1 4.500C4 1 6 .8 8 2.200s2 4 .3 5.300L5 10.500" />
              </svg>
            </IconButton>
            <IconButton aria-label="Undo history"><Chevron /></IconButton>
            <IconButton aria-label="Redo" $color="#7d7d7d">
              <svg width="11" height="11" viewBox="0 0 11 11" fill="none" stroke="currentColor" strokeWidth="1.100">
                <path d="M9 2.500A4.800 4.800 0 1 0 10.300 6M9.800 0v3.300H6.500" />
              </svg>
            </IconButton>
            <IconButton aria-label="More commands">
              <svg width="10" height="3" viewBox="0 0 10 3" fill="currentColor">
                <circle cx="1.200" cy="1.500" r="1.100" /><circle cx="5" cy="1.500" r="1.100" /><circle cx="8.800" cy="1.500" r="1.100" />
              </svg>
            </IconButton>
          </TitleSide>
          <DocTitle>
            <svg width="10" height="10" viewBox="0 0 10 10">
              <path d="M2 0h5l3 3v7H2z" fill="#f2f2f2" />
              <rect x="0" y="2.500" width="6" height="5.500" rx=".8" fill="#1c8148" />
              <path d="M6 5h3v3H6z" fill="#5fb983" />
              <path d="m2 4 2 2.500M4 4 2 6.500" stroke="#fff" strokeWidth=".7" />
            </svg>
            Lab Two of ITM 300 <span>— Saved to my Mac</span>
            <Chevron color="#8c8c8c" />
          </DocTitle>
          <TitleSide $end $gap={9}>
            <SearchBox>
              <svg width="13" height="9" viewBox="0 0 13 9" fill="none" stroke="#4a4a4a">
                <circle cx="3.700" cy="3.700" r="3" />
                <path d="m6 6 2.500 2.500M9 3.200l1.700 1.600 1.700-1.600" />
              </svg>
              <SearchInput aria-label="Search in sheet" value={search} onChange={(e) => setSearch(e.target.value)} />
              <svg width="25" height="8" viewBox="0 0 25 8" fill="none" stroke="#b8b8b8">
                <path d="M4 1 1 4l3 3M14 1l3 3-3 3" />
                <path d="M24 0v8" stroke="#555" />
              </svg>
              <IconButton aria-label="Clear search" onClick={() => setSearch('')}>
                <svg width="8" height="8" viewBox="0 0 8 8">
                  <circle cx="4" cy="4" r="4" fill="#6b6b6b" />
                  <path d="m2.500 2.500 3 3M5.500 2.500l-3 3" stroke="#fff" />
                </svg>
              </IconButton>
            </SearchBox>
            <IconButton aria-label="Share presence" $color="#c0c0c0">
              <svg width="12" height="12" viewBox="0 0 12 12" fill="none" stroke="currentColor">
                <circle cx="4" cy="4.200" r="1.900" />
                <path d="M.8 9c0-3.300 6.200-3.300 6.200 0S.8 12.300.8 9zM7 .7h4.300v3.800H9L7.500 6" />
              </svg>
            </IconButton>
          </TitleSide>
        </TitleBar>

        <Tabs>
          {tabs.map((name) => (
            <Tab key={name} $active={name === activeTab} onClick={() => setActiveTab(name)}>{name}</Tab>
          ))}
          <TellMe>
            <svg width="8" height="11" viewBox="0 0 8 11" fill="none" stroke="#c8c8c8" strokeWidth=".9">
              <path d="M2.500 8C2.500 6.500.5 6 .5 3.700a3.500 3.500 0 0 1 7 0C7.500 6 5.500 6.500 5.500 8zM2.500 9.200h3M3 10.500h2" />
            </svg>
            Tell me
          </TellMe>
          <TabActions>
            <ActionButton>
              <svg width="9" height="9" viewBox="0 0 9 9" fill="none" stroke="currentColor" strokeWidth=".9">
                <path d="M2.500 3.500H.5v5H7V6.500M5.500.8v1.700C3.500 2.700 2.500 4 2.500 6c.8-1.200 1.700-1.600 3-1.600V6L8.500 3.400z" />
              </svg>
              Share
            </ActionButton>
            <ActionButton>
              <svg width="9" height="9" viewBox="0 0 9 9" fill="none" stroke="currentColor" strokeWidth=".9">
                <path d="M.5.8h8v5.400H4.500L2.500 8.300V6.200h-2z" />
              </svg>
              Comments
            </ActionButton>
          </TabActions>
        </Tabs>

        <Ribbon>
          <Tool $width={27}>
            <ToolIcon>
              <svg width="22" height="22" viewBox="0 0 22 22" fill="none">
                <path d="M20 2.500C21 1 19.500.3 18.500 1L6 14l-2 4.500L8 16z" stroke="#8a8a8a" strokeWidth=".9" />
                <path d="M6 14 3.500 19 8 16.500z" stroke="#a04c3c" />
                <path d="M.5 19.500C3 17 5 20.500 9 20.500c4 0 3-2.500 5-2.500s2 2.500 3.500 2 2-1.500 3-.5" stroke="#a04c3c" />
              </svg>
            </ToolIcon>
            Draw
          </Tool>
          <Tool $width={34}>
            <ToolIcon>
              <svg width="30" height="22" viewBox="0 0 30 22" fill="none">
                <path d="m12.500 1 7 6-8.500 11-8-6z" stroke="#8a5c96" />
                <path d="m6.500 8.500 8 6-3.500 4-8-6.500z" fill="#6a3f78" />
                <path d="M11 20.500c3 0 3-2 5-2s1.500 2 4 1" stroke="#777" strokeWidth=".9" />
                <path d="m26 10 1.800 2 1.800-2" stroke="#8c8c8c" />
              </svg>
            </ToolIcon>
            Eraser
          </Tool>
          <Tool $width={29}>
            <ToolIcon>
              <svg width="22" height="22" viewBox="0 0 22 22" fill="none">
                <circle cx="10" cy="10" r="8.800" stroke="#6a6a6a" strokeDasharray="2.500 1.500" />
                <path d="M17.500 11v11M12 16.500h11" stroke="#2d2d2d" strokeWidth="3" />
                <path d="M17.500 11v11M12 16.500h11" stroke="#4f8a50" strokeWidth="1.200" />
              </svg>
            </ToolIcon>
            Lasso Select
          </Tool>
          <Divider />
          <PenGallery>
            <Pen color="#262626" tip="#262626" />
            <Pen color="#7c3835" tip="#8c3835" />
            <Pen color="#5c6163" tip="#63686b" jagged />
            <Pen color="#85823f" tip="#9a9640" width={20} />
          </PenGallery>
          <Tool $width={35}>
            <ToolIcon>
              <svg width="19" height="20" viewBox="0 0 19 20" stroke="#4c5f4c" fill="none">
                <path d="M9.500 0v20M0 10h19" />
              </svg>
              <Chevron color="#8c8c8c" />
            </ToolIcon>
            Add Pen
          </Tool>
          <Divider />
          <TrackpadLabel>
            <Switch $large>
              <SwitchInput type="checkbox" $size={14} $color="#9b9b9b" />
              OFF
            </Switch>
            Draw with Trackpad
          </TrackpadLabel>
        </Ribbon>

        <FormulaBar>
          <NameBox aria-label="Name box" defaultValue="D10" />
          <Stepper>
            <svg width="6" height="13" viewBox="0 0 6 13" fill="#c8c8c8">
              <path d="m3 0 3 5H0zM0 8.500h6L3 13z" />
            </svg>
          </Stepper>
          <FormulaButtons>
            <IconButton aria-label="Cancel">
              <svg width="9" height="9" viewBox="0 0 9 9" stroke="#d1594f" strokeWidth="1.600">
                <path d="m1 1 7 7M8 1 1 8" />
              </svg>
            </IconButton>
            <IconButton aria-label="Enter">
              <svg width="11" height="9" viewBox="0 0 11 9" fill="none" stroke="#73b85c" strokeWidth="1.800">
                <path d="m1 4.500 3 3L10 1" />
              </svg>
            </IconButton>
            <Fx>fx</Fx>
          </FormulaButtons>
          <FormulaInput aria-label="Formula" value={formula} onChange={(e) => setFormula(e.target.value)} />
          <IconButton aria-label="Expand formula bar">
            <svg width="8" height="5" viewBox="0 0 8 5" fill="#d0d0d0"><path d="M0 0h5L2.500 5z" /></svg>
          </IconButton>
        </FormulaBar>

        <Sheet>
          <Spreadsheet />
        </Sheet>

        <SheetTabs>
          <SheetNav>
            <svg width="5" height="8" viewBox="0 0 5 8" fill="#696969"><path d="M5 0v8L0 4z" /></svg>
            <svg width="5" height="8" viewBox="0 0 5 8" fill="#696969"><path d="M0 0v8l5-4z" /></svg>
          </SheetNav>
          <SheetTab $pad={17} $active={sheet === 'Chart'} onClick={() => setSheet('Chart')}>Chart</SheetTab>
          <SheetTab $pad={12} $active={sheet === 'Lookup Tables'} onClick={() => setSheet('Lookup Tables')}>Lookup Tables</SheetTab>
          <SheetTab $pad={17} $active={sheet === 'Data'} onClick={() => setSheet('Data')}>Data</SheetTab>
          <AddSheet aria-label="New sheet">+</AddSheet>
        </SheetTabs>

        <StatusBar>
          <span>Edit</span>
          <StatusTools>
            <IconButton aria-label="Normal view">
              <svg width="10" height="10" viewBox="0 0 10 10" fill="none" stroke="currentColor">
                <path d="M0 1.500h10M0 5h10M0 8.500h10M2 0v10M5.500 0v10M9 0v10" />
              </svg>
            </IconButton>
            <IconButton aria-label="Page layout view">
              <svg width="10" height="10" viewBox="0 0 10 10" fill="none" stroke="currentColor">
                <path d="M.5.5h9v9h-9zM2.500 2.500h5v5h-5zM4 4h2M4 6h2" />
              </svg>
            </IconButton>
            <IconButton aria-label="Page break view">
              <svg width="10" height="10" viewBox="0 0 10 10" fill="none" stroke="currentColor">
                <path d="M.5.5h9v9h-9zM.5 5.500h6v-5M4 .5v5" />
              </svg>
            </IconButton>
            <ZoomControl>
              <IconButton aria-label="Zoom out" onClick={() => setZoom(zoom - 10)}>
                <svg width="6" height="6" viewBox="0 0 6 6" stroke="currentColor" strokeWidth="1.500"><path d="M0 3h6" /></svg>
              </IconButton>
              <ZoomSlider type="range" aria-label="Zoom" min="10" max="200" value={zoom} onChange={(e) => setZoom(Number(e.target.value))} />
              <IconButton aria-label="Zoom in" onClick={() => setZoom(zoom + 10)}>
                <svg width="6" height="6" viewBox="0 0 6 6" stroke="currentColor" strokeWidth="1.500"><path d="M0 3h6M3 0v6" /></svg>
              </IconButton>
              <ZoomValue>{zoom}%</ZoomValue>
            </ZoomControl>
          </StatusTools>
        </StatusBar>
      </Window>

      <Dock>
        {apps.map(({ name, Icon, running, badge, divider, faint }, i) =>
          divider ? (
            <DockDivider key={i} $faint={faint} />
          ) : (
            <DockItem key={name} aria-label={name} $running={running}>
              <Icon />
              {badge && <Badge>{badge}</Badge>}
            </DockItem>
          )
        )}
      </Dock>
    </Desktop>
  );
};

export default App;
